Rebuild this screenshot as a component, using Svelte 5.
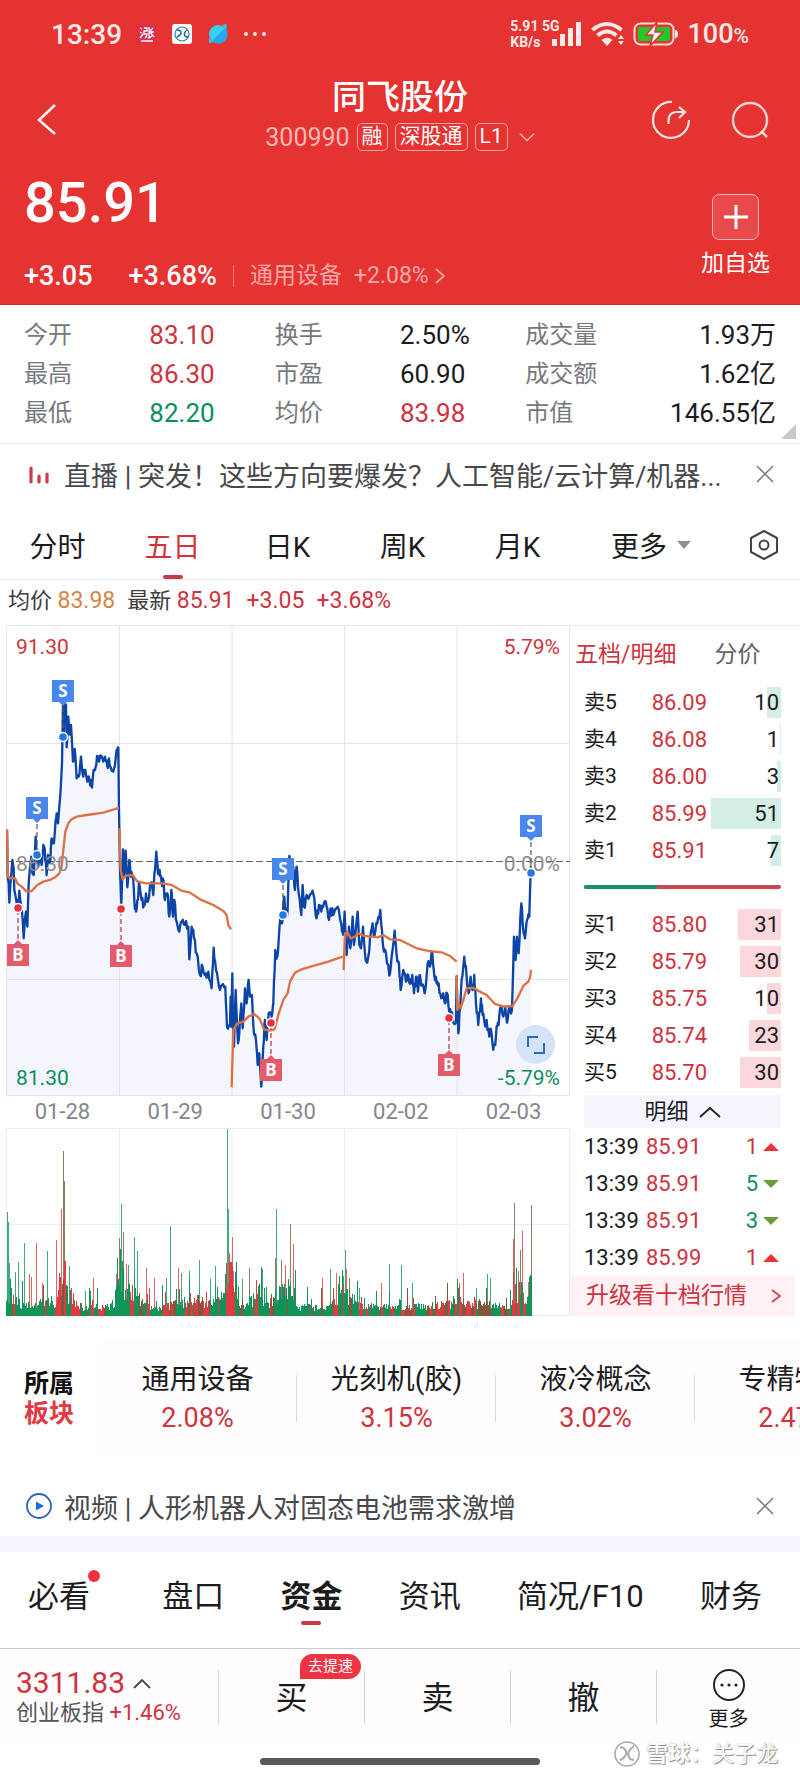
<script lang="ts">
  const stats = [
    ['今开', '83.10', 'up'], ['换手', '2.50%', ''], ['成交量', '1.93万', ''],
    ['最高', '86.30', 'up'], ['市盈', '60.90', ''], ['成交额', '1.62亿', ''],
    ['最低', '82.20', 'down'], ['均价', '83.98', 'up'], ['市值', '146.55亿', '']
  ];

  const periods = ['分时', '五日', '日K', '周K', '月K'];
  let period = '五日';

  const sells = [['卖5', '86.09', 10], ['卖4', '86.08', 1], ['卖3', '86.00', 3], ['卖2', '85.99', 51], ['卖1', '85.91', 7]];
  const buys = [['买1', '85.80', 31], ['买2', '85.79', 30], ['买3', '85.75', 10], ['买4', '85.74', 23], ['买5', '85.70', 30]];
  const maxQty = 51;

  const trades = [
    { price: '85.91', qty: 1, up: true },
    { price: '85.91', qty: 5, up: false },
    { price: '85.91', qty: 3, up: false },
    { price: '85.99', qty: 1, up: true }
  ];

  const days = ['01-28', '01-29', '01-30', '02-02', '02-03'];
  const sectors = [['通用设备', '2.08%'], ['光刻机(胶)', '3.15%'], ['液冷概念', '3.02%'], ['专精特新', '2.47%']];
  const sections = ['必看', '盘口', '资金', '资讯', '简况/F10', '财务'];
  let section = '资金';

  // price series, three units per pixel
  const price = '21,660 23,800 26,820 28,878 31,825 34,790 37,750 41,775 43,840 46,855 50,878 53,905 58,842 62,880 66,905 71,985 75,925 78,905 82,950 86,820 90,770 94,740 97,790 101,795 104,740 107,680 110,740 115,770 120,735 125,765 130,705 134,715 140,795 144,735 150,760 155,685 160,700 165,660 170,610 174,640 178,590 182,540 186,460 189,283 191,385 193,285 198,283 200,412 205,320 208,370 213,345 219,455 224,417 230,505 236,500 243,440 250,500 256,480 262,515 268,505 276,533 281,480 285,480 291,438 297,455 303,437 310,455 315,440 322,470 327,445 333,475 340,485 346,455 350,420 355,413 357,595 360,780 364,880 369,718 372,800 377,722 382,832 388,750 393,800 398,795 403,870 408,905 414,870 417,815 425,870 432,885 438,850 445,870 452,820 460,855 465,780 469,725 474,790 479,780 485,820 490,810 495,870 502,850 508,920 514,840 519,920 523,870 530,935 538,965 545,935 555,945 565,950 568,1048 575,950 582,985 590,1030 600,1095 608,1070 617,1090 625,1085 635,1135 641,1013 648,1080 657,1130 666,1125 676,1130 681,1250 690,1248 692,1160 694,1250 697,1090 699,1240 702,1310 707,1140 711,1240 714,1300 720,1230 724,1180 728,1255 735,1135 740,1180 746,1110 750,1160 756,1155 762,1270 768,1290 773,1365 778,1330 784,1430 790,1310 795,1230 800,1290 806,1210 815,1220 820,1180 826,1020 832,1040 838,960 842,910 846,940 853,860 858,920 863,900 868,738 874,800 880,770 885,840 890,770 896,850 904,915 908,825 912,890 920,855 928,860 935,850 943,865 950,925 957,885 964,905 972,880 980,890 987,930 992,895 1000,915 1010,895 1020,925 1026,965 1031,960 1034,905 1040,1035 1047,950 1051,1015 1058,920 1062,1005 1073,905 1078,1005 1083,1015 1089,950 1097,1050 1104,1045 1110,985 1118,940 1124,975 1132,940 1141,900 1146,960 1152,1025 1158,1030 1168,1097 1175,1040 1184,962 1190,1035 1197,1060 1202,1140 1210,1080 1218,1115 1225,1095 1232,1120 1237,1095 1242,1150 1248,1100 1254,1145 1260,1095 1266,1125 1274,1150 1283,1060 1290,1070 1297,1028 1303,1095 1310,1120 1316,1120 1324,1165 1330,1150 1336,1180 1341,1150 1348,1205 1354,1205 1360,1238 1368,1238 1370,1100 1375,1270 1380,1200 1385,1110 1393,1040 1400,1100 1406,1150 1412,1100 1418,1140 1423,1095 1428,1180 1435,1245 1443,1165 1448,1215 1454,1240 1460,1230 1468,1280 1474,1265 1480,1320 1486,1305 1490,1250 1496,1245 1503,1190 1510,1220 1516,1190 1521,1238 1528,1190 1536,1200 1539,1100 1542,980 1547,1050 1551,980 1556,1030 1564,880 1570,960 1575,985 1581,930 1588,920 1592,790';

  const averages = [
    '21,658 24,800 33,805 45,805 52,820 65,830 80,845 95,843 112,825 130,815 150,810 165,802 178,790 185,770 190,720 196,665 205,640 215,628 230,620 260,615 310,608 357,594',
    '358,655 362,780 368,808 378,797 398,795 412,815 440,820 485,820 515,825 545,842 570,848 600,868 640,885 670,903 680,915 685,945 693,958',
    '695,1432 700,1260 712,1240 730,1235 745,1220 762,1212 778,1225 792,1258 808,1262 824,1258 835,1215 850,1170 863,1150 870,1115 885,1088 905,1078 940,1068 985,1055 1028,1040',
    '1031,1080 1035,970 1043,968 1052,985 1065,980 1075,970 1090,977 1110,980 1135,982 1150,975 1170,988 1200,990 1250,1015 1285,1023 1325,1027 1350,1038 1370,1055',
    '1370,1095 1372,1200 1378,1185 1382,1195 1390,1170 1400,1135 1420,1133 1440,1145 1460,1155 1485,1182 1510,1190 1538,1188 1555,1160 1570,1128 1585,1115 1591,1100 1593,1080'
  ];

  // box and dot positions inside the chart
  const marks = [
    { side: 'S', x: 57, box: 66, dot: 112 },
    { side: 'S', x: 31, box: 183, dot: 230 },
    { side: 'S', x: 277, box: 244, dot: 290 },
    { side: 'S', x: 525, box: 201, dot: 248 },
    { side: 'B', x: 12, box: 330, dot: 283 },
    { side: 'B', x: 115, box: 331, dot: 284 },
    { side: 'B', x: 265, box: 445, dot: 398 },
    { side: 'B', x: 443, box: 440, dot: 393 }
  ];

  let seed = 7;
  function rand() {
    seed = (seed * 16807) % 2147483647;
    return seed / 2147483647;
  }

  // adds small ticks between the key points
  function roughen(line: string) {
    const pts = line.split(' ').map((p) => p.split(',').map(Number));
    const out: number[][] = [pts[0]];
    for (let i = 1; i < pts.length; i++) {
      const [ax, ay] = pts[i - 1];
      const [bx, by] = pts[i];
      if (bx - ax > 4) {
        out.push([ax + (bx - ax) / 3, ay + (by - ay) / 3 + (rand() - 0.5) * 30]);
        out.push([ax + ((bx - ax) * 2) / 3, ay + ((by - ay) * 2) / 3 + (rand() - 0.5) * 30]);
      }
      out.push([bx, by]);
    }
    return out.map(([x, y]) => `${x.toFixed(1)},${y.toFixed(1)}`).join(' ');
  }

  const priceLine = roughen(price);

  // volume floor: [x, height]
  const floor = [[0, 36], [8, 20], [22, 13], [50, 20], [57, 72], [62, 34], [70, 13], [90, 8], [108, 15], [114, 84], [119, 36], [128, 42], [133, 18], [150, 9], [192, 22], [205, 14], [216, 22], [222, 70], [228, 44], [236, 14], [255, 30], [260, 9], [268, 32], [286, 36], [292, 11], [320, 9], [337, 26], [344, 26], [352, 13], [400, 9], [445, 16], [453, 28], [462, 17], [485, 13], [504, 9], [509, 32], [516, 34], [520, 11], [525, 40], [528, 24]];

  const spikes: [number, number, string][] = [
    [1, 104, 'g'], [2, 94, 'g'], [3, 53, 'g'], [9, 44, 'g'], [12, 54, 'g'], [18, 73, 'g'], [23, 42, 'r'], [25, 39, 'r'], [30, 73, 'r'], [36, 33, 'r'], [41, 65, 'g'], [50, 76, 'r'], [55, 107, 'r'], [57, 165, 'm'], [58, 135, 'm'], [63, 50, 'g'], [79, 25, 'g'], [87, 38, 'r'], [110, 42, 'r'], [113, 78, 'm'], [115, 112, 'g'], [117, 84, 'm'], [120, 52, 'r'], [122, 51, 'g'], [128, 79, 'g'], [131, 65, 'g'], [140, 48, 'r'], [148, 38, 'r'], [160, 38, 'g'], [164, 90, 'g'], [172, 48, 'r'], [175, 43, 'g'], [183, 45, 'g'], [193, 56, 'g'], [204, 37, 'g'], [209, 50, 'g'], [221, 187, 'g'], [222, 107, 'g'], [223, 63, 'r'], [226, 79, 'r'], [227, 45, 'r'], [236, 37, 'g'], [243, 48, 'm'], [256, 47, 'g'], [269, 58, 'm'], [270, 107, 'g'], [275, 56, 'm'], [279, 51, 'r'], [284, 92, 'm'], [287, 72, 'r'], [316, 38, 'r'], [324, 47, 'g'], [330, 43, 'r'], [337, 40, 'g'], [339, 66, 'g'], [340, 47, 'r'], [343, 38, 'm'], [353, 28, 'g'], [375, 33, 'r'], [383, 52, 'g'], [395, 51, 'g'], [406, 33, 'g'], [453, 30, 'g'], [457, 43, 'r'], [470, 28, 'g'], [481, 42, 'g'], [484, 38, 'g'], [507, 77, 'r'], [508, 113, 'm'], [512, 45, 'm'], [514, 66, 'm'], [516, 85, 'r'], [522, 34, 'r'], [525, 111, 'm']
  ];

  function floorAt(x: number) {
    for (let i = 1; i < floor.length; i++) {
      if (x <= floor[i][0]) {
        const [ax, ah] = floor[i - 1];
        const [bx, bh] = floor[i];
        return ah + ((bh - ah) * (x - ax)) / (bx - ax);
      }
    }
    return 0;
  }

  function buildBars() {
    const bars: [number, number, string][] = [];
    let tone = 'g';
    for (let x = 0; x <= 525; x++) {
      if (rand() > 0.6) tone = rand() > 0.5 ? 'g' : rand() > 0.3 ? 'r' : 'm';
      const base = floorAt(x);
      const h = base * (0.3 + rand() * 0.7) + (rand() > 0.85 ? 4 + rand() * 18 : 0);
      const hot = (x > 48 && x < 60) || (x > 223 && x < 229) || (x > 452 && x < 460);
      bars.push([x, Math.round(h) + 2, hot && tone === 'g' ? 'r' : tone]);
    }
    return bars;
  }

  const bars = buildBars();
</script>

<div class="page">
  <header class="head">
    <div class="status">
      <div class="status-left">
        <span class="clock">13:39</span>
        <svg width="18" height="20" viewBox="0 0 18 20">
          <rect width="18" height="18" y="1" rx="2" fill="#d92f55" />
          <path d="M2 4l2 1M2 8l2 1M2 14l3-4M6 4h3v3H6v3h3q0 3-2 4M11 3v11l3-2M11 8h5M15 4l-3 3M12 8l4 5M3 17h12" stroke="#fff" stroke-width="1.3" fill="none" />
        </svg>
        <svg width="20" height="20" viewBox="0 0 20 20">
          <rect width="20" height="20" rx="3" fill="#fff" />
          <circle cx="10" cy="10" r="7" fill="none" stroke="#2d7fa3" stroke-width="1.2" />
          <path d="M5 6q4 0 4 3 0 2-4 4M15 6q-4 3-2 6 1 1 3 1" fill="none" stroke="#1c6b94" stroke-width="1.5" />
        </svg>
        <svg width="20" height="20" viewBox="0 0 20 20">
          <circle cx="10" cy="10" r="9" fill="#36d0fa" />
          <path d="M17 4A9 9 0 0 1 4 17z" fill="#25aaf0" />
          <path d="M14 1l5-1-1 6zM1 14v5l5-1z" fill="#36c4f5" />
        </svg>
        <span class="dots"><i></i><i></i><i></i></span>
      </div>
      <div class="status-right">
        <span class="net"><span>5.91 5G</span><span>KB/s</span></span>
        <svg class="signal" width="32" height="26" viewBox="0 0 32 26">
          <path d="M1 18h5v7H1zM9 13h5v12H9zM17 7h5v18h-5zM25 1h5v24h-5z" fill="#ffe9e9" />
        </svg>
        <svg width="34" height="26" viewBox="0 0 34 26">
          <path d="M1.500 9q14.500-12 29 0M6.500 14.500q9.500-8 19 0" fill="none" stroke="#ffe9e9" stroke-width="4" />
          <path d="M10.500 19q5.500-4.500 11 0L16 25zM27 18l3-4 3 4zM27 20l3 4 3-4z" fill="#ffe9e9" />
        </svg>
        <svg width="46" height="26" viewBox="0 0 46 26">
          <rect x="1.500" y="2.500" width="39" height="21" rx="6" fill="none" stroke="#ffd9d9" stroke-width="2" />
          <rect x="5" y="6" width="32" height="14" rx="2" fill="#25c62c" />
          <path d="M42 9q3 0 3 4t-3 4z" fill="#fff" />
          <path d="M24 1L13 14h7l-3 11 13-14h-8z" fill="#fff" stroke="#e53331" stroke-width="1.500" />
        </svg>
        <span class="charge">100<small>%</small></span>
      </div>
    </div>

    <nav class="nav">
      <button class="plain back" aria-label="返回">
        <svg width="22" height="34" viewBox="0 0 22 34"><path d="M20 2L4 17l16 14" fill="none" stroke="#fff" stroke-width="2.500" /></svg>
      </button>
      <div class="title">
        <h1>同飞股份</h1>
        <div class="code">
          <span>300990</span><b>融</b><b>深股通</b><b>L1</b>
          <svg width="16" height="12" viewBox="0 0 18 12"><path d="M1 2l8 8 8-8" fill="none" stroke="#ffa9a7" stroke-width="1.800" /></svg>
        </div>
      </div>
      <div class="tools">
        <button class="plain" aria-label="分享">
          <svg width="40" height="40" viewBox="0 0 40 40">
            <path d="M21 2A18 18 0 1 0 38 20M17.500 24v-3q0-9 8-9h8M28 7l6 5-6 6" fill="none" stroke="#ffe8e8" stroke-width="2.200" />
          </svg>
        </button>
        <button class="plain" aria-label="搜索">
          <svg width="40" height="40" viewBox="0 0 40 40">
            <circle cx="20" cy="20" r="17" fill="none" stroke="#ffd6d5" stroke-width="2.400" />
            <path d="M31 31l6 6" stroke="#ffd6d5" stroke-width="2.600" />
          </svg>
        </button>
      </div>
    </nav>

    <div class="quote">
      <div>
        <div class="last">85.91</div>
        <div class="change">
          <span>+3.05</span><span class="pct">+3.68%</span>
          <a href="#industry">通用设备 <span>+2.08%</span>
            <svg width="10" height="18" viewBox="0 0 10 18"><path d="M1 2l8 7-8 7" fill="none" stroke="currentColor" stroke-width="1.800" /></svg>
          </a>
        </div>
      </div>
      <button class="plain add">
        <span class="plus"><svg width="24" height="24" viewBox="0 0 24 24"><path d="M12 0v24M0 12h24" stroke="#fff" stroke-width="3" /></svg></span>
        加自选
      </button>
    </div>
  </header>

  <dl class="stats">
    {#each stats as [name, value, tone]}
      <dt>{name}</dt>
      <dd class={tone}>{value}</dd>
    {/each}
    <i class="corner"></i>
  </dl>

  <div class="news">
    <svg class="news-icon" width="26" height="26" viewBox="0 0 26 26"><path d="M5 7v14M13 15v6M21 13v8" stroke="#cf3a45" stroke-width="3.200" stroke-linecap="round" /></svg>
    <a href="#live">直播 | 突发！这些方向要爆发？人工智能/云计算/机器...</a>
    <button class="plain" aria-label="关闭">
      <svg width="18" height="18" viewBox="0 0 18 18"><path d="M1 1l16 16M17 1L1 17" stroke="#777" stroke-width="1.500" /></svg>
    </button>
  </div>

  <div class="periods">
    {#each periods as p}
      <button class="plain" class:active={p === period} onclick={() => (period = p)}>{p}</button>
    {/each}
    <button class="plain shift">更多 <i class="caret"></i></button>
    <button class="plain shift" aria-label="设置">
      <svg width="30" height="32" viewBox="0 0 30 32">
        <path d="M15 2L28 9v14l-13 7L2 23V9z" fill="none" stroke="#444" stroke-width="2" stroke-linejoin="round" />
        <circle cx="15" cy="16" r="4.500" fill="none" stroke="#444" stroke-width="2" />
      </svg>
    </button>
  </div>

  <div class="summary">
    <span>均价 <em class="avg">83.98</em></span>
    <span>最新 <em>85.91</em></span>
    <em>+3.05</em>
    <em>+3.68%</em>
  </div>

  <div class="board">
    <div class="charts">
      <div class="plot">
        <svg viewBox="0 0 564 471">
          <g transform="scale(0.3333) translate(-18 -45)">
            <polygon points={`21,1457 ${priceLine} 1593,1457`} fill="#f5f5fe" />
          </g>
          <path d="M0 .5H564M0 118.500H564M0 354.500H564M0 470.500H564M.5 0V471M113.500 0V471M226 0V471M338.500 0V471M451 0V471M563.500 0V471" stroke="#e4e4ea" stroke-width="1" fill="none" />
          <path d="M0 236.500H564" stroke="#666" stroke-width="1" stroke-dasharray="7 3" />
          <g transform="scale(0.3333) translate(-18 -45)" fill="none" stroke-linejoin="round">
            <polyline points={priceLine} stroke="#0c45a6" stroke-width="7" />
            {#each averages as line}
              <polyline points={line} stroke="#dd7144" stroke-width="7" />
            {/each}
          </g>
        </svg>
        <span class="axis tl up">91.30</span>
        <span class="axis tr up">5.79%</span>
        <span class="axis ml">86.30</span>
        <span class="axis mr">0.00%</span>
        <span class="axis bl down">81.30</span>
        <span class="axis br down">-5.79%</span>
        <svg class="marks" viewBox="0 0 564 471">
          {#each marks as m}
            {@const color = m.side === 'S' ? '#4a87ea' : '#e45b6c'}
            {@const dir = m.side === 'S' ? 1 : -1}
            <path d={`M${m.x} ${m.box + dir * 16}V${m.dot}`} stroke={m.side === 'S' ? '#555' : '#b23345'} stroke-width="1.200" stroke-dasharray="5 3" />
            <rect x={m.x - 11} y={m.box - 11} width="22" height="22" fill={color} />
            <path d={`M${m.x - 4} ${m.box + dir * 11}h8l-4 ${dir * 4}z`} fill={color} />
            <circle cx={m.x} cy={m.dot} r="4.500" fill={m.side === 'S' ? '#1f78e6' : '#e83040'} stroke="#fff" stroke-width="1.500" />
            <text x={m.x} y={m.box + 6}>{m.side}</text>
          {/each}
        </svg>
        <button class="plain expand" aria-label="全屏">
          <svg width="20" height="20" viewBox="0 0 20 20"><path d="M2 12V2h10M18 8v10H8" fill="none" stroke="#2a6cc4" stroke-width="2" /></svg>
        </button>
      </div>
      <div class="days">
        {#each days as d}<span>{d}</span>{/each}
      </div>
      <svg class="volume" viewBox="0 0 564 188">
        <path d="M0 .5H564M0 96.500H564M0 187.500H564M.5 0V188M113.500 0V188M226 0V188M338.500 0V188M451 0V188M563.500 0V188" stroke="#ededf1" fill="none" />
        {#each spikes as [x, h, tone]}
          <rect class={tone} {x} y={188 - h} width="1" height={h} opacity="0.8" />
        {/each}
        {#each bars as [x, h, tone]}
          <rect class={tone} {x} y={188 - h} width="1" height={h} />
        {/each}
      </svg>
    </div>

    <aside class="book">
      <div class="book-tabs">
        <button class="plain active">五档/明细</button>
        <button class="plain">分价</button>
      </div>
      <table>
        <tbody>
          {#each sells as [name, value, qty]}
            <tr>
              <td>{name}</td>
              <td class="num up">{value}</td>
              <td class="num qty"><i class="sell" style="width: {(Number(qty) / maxQty) * 100}%"></i><span>{qty}</span></td>
            </tr>
          {/each}
        </tbody>
      </table>
      <div class="ratio"><i></i></div>
      <table>
        <tbody>
          {#each buys as [name, value, qty]}
            <tr>
              <td>{name}</td>
              <td class="num up">{value}</td>
              <td class="num qty"><i class="buy" style="width: {(Number(qty) / maxQty) * 100}%"></i><span>{qty}</span></td>
            </tr>
          {/each}
        </tbody>
      </table>
      <button class="plain detail">
        明细
        <svg width="22" height="12" viewBox="0 0 22 12"><path d="M1 11L11 2l10 9" fill="none" stroke="#222" stroke-width="1.800" /></svg>
      </button>
      <table class="trades">
        <tbody>
          {#each trades as t}
            <tr>
              <td>13:39</td>
              <td class="up">{t.price}</td>
              <td class="num {t.up ? 'up' : 'down'}">{t.qty}<i class="tick" class:fall={!t.up}></i></td>
            </tr>
          {/each}
        </tbody>
      </table>
      <a class="upgrade" href="#level2">升级看十档行情
        <svg width="10" height="16" viewBox="0 0 10 16"><path d="M1 2l8 6-8 6" fill="none" stroke="#cf3a45" stroke-width="1.600" /></svg>
      </a>
    </aside>
  </div>

  <section class="sectors">
    <h2>所属<span>板块</span></h2>
    <div class="track">
      {#each sectors as [name, pct]}
        <a href="#sector"><span>{name}</span><em>{pct}</em></a>
      {/each}
    </div>
  </section>

  <div class="news video">
    <svg class="news-icon" width="26" height="26" viewBox="0 0 26 26">
      <circle cx="13" cy="13" r="12" fill="none" stroke="#2a63b8" stroke-width="1.800" />
      <path d="M10 8.500l8 4.500-8 4.500z" fill="#1f6be0" />
    </svg>
    <a href="#video">视频 | 人形机器人对固态电池需求激增</a>
    <button class="plain" aria-label="关闭">
      <svg width="18" height="18" viewBox="0 0 18 18"><path d="M1 1l16 16M17 1L1 17" stroke="#777" stroke-width="1.500" /></svg>
    </button>
  </div>

  <div class="sections">
    {#each sections as s, i}
      <button class="plain" class:dot={i === 0} class:active={s === section} onclick={() => (section = s)}>{s}</button>
    {/each}
  </div>

  <footer class="bar">
    <div class="index">
      <div class="index-value">3311.83
        <svg width="18" height="11" viewBox="0 0 18 11"><path d="M1 10l8-8 8 8" fill="none" stroke="#444" stroke-width="1.800" /></svg>
      </div>
      <div class="index-name">创业板指 <em>+1.46%</em></div>
    </div>
    <button class="plain action">买<span class="badge">去提速</span></button>
    <button class="plain action">卖</button>
    <button class="plain action">撤</button>
    <button class="plain action more">
      <svg width="34" height="34" viewBox="0 0 34 34">
        <circle cx="17" cy="17" r="15" fill="none" stroke="#222" stroke-width="2" />
        <circle cx="10" cy="17" r="1.600" fill="#222" /><circle cx="17" cy="17" r="1.600" fill="#222" /><circle cx="24" cy="17" r="1.600" fill="#222" />
      </svg>
      更多
    </button>
  </footer>
  <div class="home"><i></i></div>

  <div class="watermark">
    <svg width="28" height="28" viewBox="0 0 28 28">
      <circle cx="14" cy="14" r="12" fill="none" stroke="#aaa" stroke-width="1.600" />
      <path d="M7 7q7 1 6 7-1 4-6 6M21 6q-8 6-5 11 1 3 5 3" fill="none" stroke="#aaa" stroke-width="2" />
    </svg>
    <span><b>雪球</b>：关子龙</span>
  </div>
</div>

<style>
  :global(body) {
    margin: 0;
    background: #fff;
  }

  .page {
    position: relative;
    overflow: hidden;
    font-family: Roboto, "Noto Sans CJK SC", sans-serif;
    color: #1c1c1e;
  }

  .plain {
    display: flex;
    align-items: center;
    justify-content: center;
    border: 0;
    padding: 0;
    background: none;
    font: inherit;
    color: inherit;
  }

  a {
    color: inherit;
    text-decoration: none;
  }

  em,
  i {
    font-style: normal;
  }

  svg {
    flex: none;
  }

  .up {
    color: #cf3340;
  }

  .down {
    color: #0a8f5c;
  }

  .head {
    background: #e53331;
    border-bottom: 1px solid #bf3230;
    color: #fff;
  }

  .status {
    display: flex;
    justify-content: space-between;
    align-items: center;
    height: 68px;
    padding: 0 51px;
  }

  .status-left,
  .status-right {
    display: flex;
    align-items: center;
  }

  .status-left {
    gap: 16px;
  }

  .clock {
    font-size: 28px;
    font-weight: 500;
    color: #ffe9e9;
  }

  .dots {
    display: flex;
    gap: 5px;
  }

  .dots i {
    width: 4px;
    height: 4px;
    border-radius: 50%;
    background: #ffe9e9;
  }

  .status-right {
    gap: 8px;
    color: #ffe9e9;
  }

  .net {
    display: flex;
    flex-direction: column;
    font-size: 14px;
    font-weight: 700;
    line-height: 16px;
  }

  .signal {
    margin-left: -16px;
  }

  .charge {
    font-size: 27px;
    font-weight: 500;
  }

  .charge small {
    font-size: 21px;
  }

  .nav {
    display: grid;
    grid-template-columns: 1fr auto 1fr;
    align-items: center;
    padding: 9px 30px 0;
  }

  .back,
  .tools {
    margin-top: 6px;
  }

  .back {
    justify-self: start;
    padding-left: 5px;
  }

  .title h1 {
    margin: 0;
    font-size: 34px;
    font-weight: 500;
    line-height: 40px;
    text-align: center;
  }

  .code {
    display: flex;
    align-items: center;
    gap: 7px;
    height: 40px;
    font-size: 25px;
    color: #ffb9b7;
  }

  .code b {
    box-sizing: border-box;
    height: 28px;
    padding: 0 4px;
    border: 1px solid #f7a3a1;
    border-radius: 5px;
    font-size: 21px;
    font-weight: 400;
    line-height: 25px;
    color: #fff;
  }

  .code svg {
    margin-left: 4px;
  }

  .tools {
    display: flex;
    justify-content: flex-end;
    gap: 39px;
  }

  .quote {
    display: flex;
    justify-content: space-between;
    align-items: flex-start;
    padding: 0 30px 0 24px;
  }

  .last {
    height: 90px;
    font-size: 56px;
    font-weight: 500;
    line-height: 92px;
  }

  .change {
    display: flex;
    align-items: center;
    height: 57px;
    font-size: 27px;
    font-weight: 500;
  }

  .pct {
    margin-left: 36px;
  }

  .change a {
    display: flex;
    align-items: center;
    gap: 12px;
    margin-left: 16px;
    padding-left: 16px;
    border-left: 1px solid #ef7f7d;
    font-size: 23px;
    font-weight: 400;
    line-height: 22px;
    color: #f9a9a7;
  }

  .change svg {
    margin-left: -6px;
  }

  .add {
    flex-direction: column;
    gap: 10px;
    margin-top: 37px;
    font-size: 23px;
    line-height: 28px;
  }

  .plus {
    box-sizing: border-box;
    display: flex;
    align-items: center;
    justify-content: center;
    width: 47px;
    height: 46px;
    border: 1px solid #f9b5b4;
    border-radius: 7px;
    background: #e84a4b;
  }

  .stats {
    position: relative;
    display: grid;
    grid-template-columns: repeat(6, 1fr);
    margin: 0;
    padding: 11px 24px 10px;
    border-bottom: 1px solid #ececee;
    font-size: 26px;
    line-height: 39px;
  }

  .stats dt {
    font-size: 24px;
    color: #77787c;
  }

  .stats dd {
    margin: 0;
    white-space: nowrap;
  }

  .stats dd:nth-of-type(3n) {
    text-align: right;
  }

  .corner {
    position: absolute;
    right: 4px;
    bottom: 4px;
    border-left: 15px solid transparent;
    border-bottom: 15px solid #c9c9cb;
  }

  .news {
    display: flex;
    align-items: center;
    height: 60px;
    padding: 0 26px;
    font-size: 27px;
    color: #48484b;
  }

  .news a {
    flex: 1;
    margin: 0 8px 0 12px;
    white-space: nowrap;
  }

  .periods {
    display: grid;
    grid-template-columns: repeat(5, 23fr) 29fr 16fr;
    height: 68px;
    margin-top: 7px;
    border-bottom: 1px solid #ececee;
    font-size: 28px;
  }

  .periods .shift {
    padding-left: 7px;
  }

  .periods .active,
  .sections .active {
    position: relative;
  }

  .periods .active {
    color: #cf3340;
  }

  .periods .active::after,
  .sections .active::after {
    content: '';
    position: absolute;
    left: 50%;
    bottom: 0;
    width: 20px;
    height: 4px;
    border-radius: 2px;
    background: #c73a47;
    transform: translateX(-50%);
  }

  .caret {
    margin-left: 10px;
    border: 7px solid transparent;
    border-top: 8px solid #8e8e92;
    border-bottom: 0;
  }

  .summary {
    display: flex;
    align-items: baseline;
    gap: 12px;
    height: 45px;
    padding-left: 8px;
    font-size: 22px;
    line-height: 42px;
    color: #3c3c3f;
  }

  .summary em {
    font-size: 23px;
    color: #cf3340;
  }

  .summary .avg {
    color: #d3864b;
  }

  .board {
    display: grid;
    grid-template-columns: 1fr 230px;
  }

  .charts {
    padding-left: 6px;
  }

  .plot {
    position: relative;
  }

  .plot > svg,
  .volume {
    display: block;
    width: 100%;
  }

  .plot .marks {
    position: absolute;
    top: 0;
    left: 0;
  }

  .marks text {
    font-family: "Noto Sans", sans-serif;
    font-size: 17px;
    font-weight: 700;
    text-anchor: middle;
    fill: #fff;
  }

  .axis {
    position: absolute;
    font-size: 21px;
    line-height: 24px;
  }

  .tl,
  .tr {
    top: 10px;
  }

  .ml,
  .mr {
    top: 50%;
    margin-top: 3px;
    transform: translateY(-50%);
    color: #8c8c90;
  }

  .bl,
  .br {
    bottom: 6px;
  }

  .tl,
  .ml,
  .bl {
    left: 10px;
  }

  .tr,
  .mr,
  .br {
    right: 10px;
  }

  .expand {
    position: absolute;
    right: 15px;
    bottom: 32px;
    width: 39px;
    height: 39px;
    border-radius: 50%;
    background: #d5e3f8;
  }

  .days {
    display: grid;
    grid-template-columns: repeat(5, 1fr);
    font-size: 22px;
    line-height: 32px;
    text-align: center;
    color: #85858a;
  }

  .g {
    fill: #10945a;
  }

  .r {
    fill: #e23a40;
  }

  .m {
    fill: #7b5a3e;
  }

  .book {
    display: flex;
    flex-direction: column;
    border-top: 1px solid #ececee;
    font-size: 22px;
  }

  .book-tabs {
    box-sizing: border-box;
    display: flex;
    gap: 38px;
    height: 58px;
    padding: 0 0 6px 5px;
    font-size: 23px;
    color: #626266;
  }

  .book-tabs .active {
    color: #cf3340;
  }

  table {
    table-layout: fixed;
    width: 197px;
    margin-left: 14px;
    border-spacing: 0;
  }

  td {
    height: 37px;
    padding: 0;
    line-height: 37px;
  }

  td:first-child {
    width: 62px;
    font-size: 21px;
  }

  td:nth-child(2) {
    width: 61px;
  }

  td.num:nth-child(2) {
    padding-right: 4px;
  }

  .num {
    text-align: right;
  }

  td.qty {
    position: relative;
    padding: 0 2px 0 5px;
  }

  .qty span {
    position: relative;
  }

  .qty i {
    position: absolute;
    top: 3px;
    right: 0;
    height: 31px;
  }

  .sell {
    background: #d3efe4;
  }

  .buy {
    background: #fcd8dc;
  }

  .ratio {
    width: 197px;
    height: 4px;
    margin: 16px 0 17px 14px;
    border-radius: 2px;
    background: #cb4650;
    overflow: hidden;
  }

  .ratio i {
    display: block;
    width: 37%;
    height: 100%;
    background: #17936a;
  }

  .detail {
    gap: 10px;
    width: 197px;
    height: 33px;
    margin: 4px 0 0 14px;
    background: #f5f5fe;
    line-height: 28px;
  }

  .trades td:first-child {
    font-size: 22px;
  }

  .tick {
    display: inline-block;
    margin: 0 2px 3px 5px;
    border: 8px solid transparent;
    border-top: 0;
    border-bottom: 8px solid #ee3338;
  }

  .tick.fall {
    border-top: 8px solid #6a9d3a;
    border-bottom: 0;
  }

  .upgrade {
    display: flex;
    align-items: center;
    justify-content: space-between;
    height: 40px;
    margin-right: 5px;
    padding: 0 14px 0 16px;
    background: #fff1f4;
    font-size: 23px;
    line-height: 36px;
    color: #cf3340;
  }

  .sectors {
    display: flex;
    align-items: center;
    height: 117px;
    margin-top: 24px;
  }

  .sectors h2 {
    display: flex;
    flex-direction: column;
    width: 74px;
    margin: 0;
    padding-left: 24px;
    font-size: 25px;
    line-height: 30px;
    color: #111;
  }

  .sectors h2 span {
    color: #e23a44;
  }

  .track {
    display: flex;
    align-items: center;
    flex: 1;
    height: 100%;
    overflow: hidden;
    background: #fffdfe;
  }

  .track a {
    display: flex;
    flex: 0 0 199px;
    flex-direction: column;
    align-items: center;
    font-size: 28px;
    line-height: 38px;
    white-space: nowrap;
    background: linear-gradient(#d8d8dc, #d8d8dc) right center / 1px 47px no-repeat;
  }

  .track em {
    font-size: 27px;
    color: #cf3340;
  }

  .video {
    margin-top: 19px;
  }

  .sections {
    display: flex;
    justify-content: space-between;
    height: 71px;
    padding: 6px 38px 19px 28px;
    border-top: 16px solid #f5f5fe;
    border-bottom: 1px solid #c9c9cc;
    font-size: 31px;
  }

  .sections .active {
    font-weight: 700;
  }

  .sections .active::after {
    bottom: 4px;
  }

  .sections .dot {
    position: relative;
    padding-right: 16px;
  }

  .dot::after {
    content: '';
    position: absolute;
    top: 12px;
    right: 6px;
    width: 12px;
    height: 12px;
    border-radius: 50%;
    background: #f2313f;
  }

  .bar {
    display: grid;
    grid-template-columns: 218fr 146fr 146fr 146fr 144fr;
    align-items: center;
    height: 96px;
    background: #fffdfe;
  }

  .index {
    padding-left: 16px;
    white-space: nowrap;
  }

  .index-value {
    display: flex;
    align-items: center;
    gap: 8px;
    font-size: 30px;
    line-height: 32px;
    color: #cf3340;
  }

  .index-name {
    font-size: 22px;
    line-height: 28px;
    color: #55555a;
  }

  .index-name em {
    color: #cf3340;
  }

  .action {
    position: relative;
    height: 54px;
    padding-bottom: 4px;
    border-left: 1px solid #d4d4d8;
    font-size: 32px;
  }

  .more {
    flex-direction: column;
    padding: 6px 0 0;
    font-size: 20px;
    line-height: 26px;
    gap: 4px;
  }

  .badge {
    position: absolute;
    top: -16px;
    right: 3px;
    padding: 0 8px;
    border-radius: 13px 13px 13px 0;
    background: #ee3442;
    font-size: 15px;
    line-height: 25px;
    color: #fff;
  }

  .home {
    display: flex;
    align-items: center;
    justify-content: center;
    height: 32px;
  }

  .home i {
    width: 35%;
    height: 7px;
    border-radius: 4px;
    background: #5a5a5a;
  }

  .watermark {
    position: absolute;
    right: 22px;
    bottom: 8px;
    display: flex;
    align-items: center;
    gap: 5px;
    font-size: 22px;
    line-height: 30px;
    color: #fff;
    text-shadow: 1px 1px 1px #888, 0 0 1px #999;
  }
</style>
